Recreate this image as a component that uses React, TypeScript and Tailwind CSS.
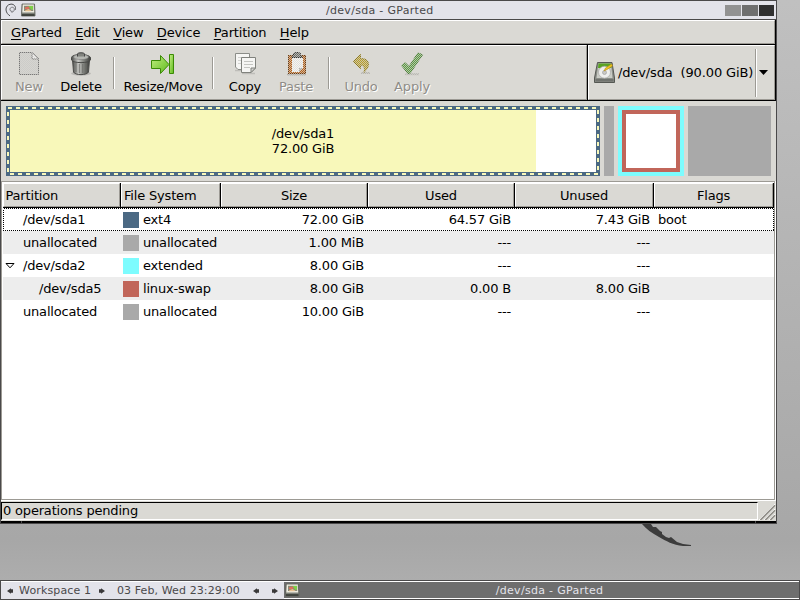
import type { ReactNode } from 'react';

type Row = {
  name: string;
  indent: string;
  expander?: boolean;
  swatch: string;
  fs: string;
  size: string;
  used: string;
  unused: string;
  flags?: string;
};

const ROWS: Row[] = [
  { name: '/dev/sda1', indent: 'pl-[20px]', swatch: 'bg-[#4b6983]', fs: 'ext4', size: '72.00 GiB', used: '64.57 GiB', unused: '7.43 GiB', flags: 'boot' },
  { name: 'unallocated', indent: 'pl-[20px]', swatch: 'bg-[#a9a9a9]', fs: 'unallocated', size: '1.00 MiB', used: '---', unused: '---' },
  { name: '/dev/sda2', indent: 'pl-[2px]', expander: true, swatch: 'bg-[#7dfcfe]', fs: 'extended', size: '8.00 GiB', used: '---', unused: '---' },
  { name: '/dev/sda5', indent: 'pl-[36px]', swatch: 'bg-[#c1665a]', fs: 'linux-swap', size: '8.00 GiB', used: '0.00 B', unused: '8.00 GiB' },
  { name: 'unallocated', indent: 'pl-[20px]', swatch: 'bg-[#a9a9a9]', fs: 'unallocated', size: '10.00 GiB', used: '---', unused: '---' },
];

const COLUMNS = [
  { label: 'Partition', className: 'justify-start pl-[1.5px]' },
  { label: 'File System', className: 'justify-start pl-[2px]' },
  { label: 'Size', className: 'justify-center' },
  { label: 'Used', className: 'justify-center' },
  { label: 'Unused', className: 'justify-center' },
  { label: 'Flags', className: 'justify-center' },
];

const GRID = 'grid grid-cols-[118px_100px_147px_147px_139px_120px]';

const MENUS = ['GParted', 'Edit', 'View', 'Device', 'Partition', 'Help'];

export default function App() {
  return (
    <div className="flex h-[600px] w-[800px] flex-col overflow-hidden bg-linear-to-b from-[#c0c0c0] via-[#a7a7a7] via-90% to-[#b0b0b0] font-['DejaVu_Sans',sans-serif] text-[13px] leading-[15px] tracking-[-0.18px] text-black">
      <div className="flex h-[524px] w-[777px] flex-col border border-[#4a494a] bg-[#dad9d4]">
        <TitleBar />
        <MenuBar />
        <div className="flex h-[56px] shrink-0">
          <Toolbar />
          <DevicePicker />
        </div>
        <DiskMap />
        <PartitionList />
        <StatusBar />
        {/* resize handle with its two corner grips */}
        <div className="flex h-[2px] shrink-0 gap-px bg-[#4a494a]">
          <div className="w-[20px] bg-black" />
          <div className="flex-1 bg-black" />
          <div className="w-[20px] bg-black" />
        </div>
      </div>
      <div className="h-[56px] shrink-0">
        {/* tail of the wallpaper swirl */}
        <svg className="ml-[641px]" width="52" height="24" viewBox="0 0 52 24">
          <path d="M1 0H10L12 3L15 3L19 7L21 8V10L25 13L28 14L30 13L36 18L42 20L50 21V22H42C32 21 25 17 18 13C11 9 5 5 1 0Z" fill="#3c3c3c" />
        </svg>
      </div>
      <Taskbar />
    </div>
  );
}

function TitleBar() {
  return (
    <div className="flex h-[19px] shrink-0 items-center border-b border-[#4a494a] bg-[#e3e3ea] pl-[4px]">
      <Swirl />
      <div className="ml-[4px]">
        <DiskIcon />
      </div>
      <div className="flex-1 pl-[290px] text-[11px] tracking-[0.3px] text-[#4a494a]">/dev/sda - GParted</div>
      <div className="mr-[2px] flex gap-px">
        <div className="h-[11px] w-[16px] bg-[#929292]" />
        <div className="h-[11px] w-[16px] bg-[#6e6e6e]" />
        <div className="h-[11px] w-[15px] bg-[#303030]" />
      </div>
    </div>
  );
}

function MenuBar() {
  return (
    <div className="h-[25px] shrink-0 border-r border-b border-black">
      <div className="flex h-full items-center gap-[13.5px] border border-t-white border-r-[#9c9a94] border-b-[#9c9a94] border-l-white pl-[9px]">
        {MENUS.map((m) => (
          <span key={m}>
            <span className="underline underline-offset-2">{m[0]}</span>
            {m.slice(1)}
          </span>
        ))}
      </div>
    </div>
  );
}

function Toolbar() {
  return (
    <div className="w-[587px] shrink-0 border-r border-b border-black">
      <div className="flex h-full border border-t-white border-r-[#9c9a94] border-b-[#9c9a94] border-l-white">
        <Tool label="New" width="w-[54px]" disabled>
          <NewIcon />
        </Tool>
        <Tool label="Delete" width="w-[50px]">
          <TrashIcon />
        </Tool>
        <Separator className="pl-[2px]" />
        <Tool label="Resize/Move" width="w-[86px]">
          <ResizeIcon />
        </Tool>
        <Separator />
        <Tool label="Copy" width="w-[50px]">
          <CopyIcon />
        </Tool>
        <Tool label="Paste" width="w-[52px]" disabled>
          <PasteIcon />
        </Tool>
        <Separator />
        <Tool label="Undo" width="w-[50px]" disabled>
          <UndoIcon />
        </Tool>
        <Tool label="Apply" width="w-[52px]" disabled>
          <ApplyIcon />
        </Tool>
      </div>
    </div>
  );
}

function Tool({ label, width, disabled, children }: { label: string; width: string; disabled?: boolean; children: ReactNode }) {
  return (
    <div className={`${width} flex shrink-0 flex-col items-center pt-[6px]`}>
      <svg width="24" height="24" viewBox="0 0 24 24">
        <defs>
          <pattern id="stipple" width="2" height="2" patternUnits="userSpaceOnUse">
            <path d="M0 0h1v1H0zM1 1h1v1H1z" fill="#dad9d4" fillOpacity="0.7" shapeRendering="crispEdges" />
          </pattern>
        </defs>
        {children}
        {disabled && <rect width="24" height="24" fill="url(#stipple)" />}
      </svg>
      <span
        className={
          disabled
            ? 'mt-[3px] whitespace-nowrap text-[#8f8d88] [text-shadow:1px_1px_0_#fff]'
            : 'mt-[3px] whitespace-nowrap'
        }
      >
        {label}
      </span>
    </div>
  );
}

function Separator({ className = '' }: { className?: string }) {
  return (
    <div className={`${className} flex w-[14px] shrink-0 justify-center pt-[11px]`}>
      <div className="h-[32px] w-[2px] border-r border-l border-r-white border-l-[#9c9a94]" />
    </div>
  );
}

function DevicePicker() {
  return (
    <div className="flex-1 border-r border-b border-black">
      <div className="flex h-full items-center border border-t-white border-r-[#9c9a94] border-b-[#9c9a94] border-l-white pl-[5px]">
        <svg className="shrink-0" width="22" height="22" viewBox="0 0 22 22">
          <path d="M3.5 0.5H18L20.5 16V20.5H0.5V16Z" fill="#8b8e88" stroke="#555853" />
          <path d="M4.5 1.5H17L18.5 16H2.5Z" fill="#c9ccc5" />
          <path d="M4.5 1.5H17L17.5 6H4Z" fill="#58a321" />
          <circle cx="10.5" cy="10.2" r="6" fill="#efefed" stroke="#a5a5a3" strokeWidth="0.7" />
          <circle cx="10.5" cy="10.5" r="2" fill="#c9c9c7" stroke="#999" strokeWidth="0.6" />
          <path d="M17.5 2L18.5 4L13 7.5L10 9L11.5 6Z" fill="#edc522" stroke="#b38a10" strokeWidth="0.6" />
          <path d="M1.5 17H19.5V19.5H1.5Z" fill="#70736e" />
        </svg>
        <span className="ml-[2px] tracking-[-0.14px] whitespace-pre">/dev/sda  (90.00 GiB)</span>
        <div className="ml-auto flex items-center">
          <div className="h-[48px] w-[2px] border-r border-l border-r-white border-l-[#9c9a94]" />
          <svg className="mr-[6px] ml-[2px]" width="9" height="5" viewBox="0 0 9 5">
            <path d="M0 0H9L4.5 5Z" fill="#000" />
          </svg>
        </div>
      </div>
    </div>
  );
}

function DiskMap() {
  return (
    <div className="flex h-[80px] shrink-0 gap-[4px] pt-[5px] pl-[5px]">
      <div className="grid h-[70px] w-[594px]">
        <div className="col-start-1 row-start-1 flex border-4 border-[#4b6983]">
          <div className="w-[526px] bg-[#f8f8ba]" />
          <div className="flex-1 bg-white" />
        </div>
        <svg className="col-start-1 row-start-1" width="594" height="70" viewBox="0 0 594 70">
          <rect x="2" y="2" width="590" height="66" fill="none" stroke="#f8f8ba" strokeWidth="2" strokeDasharray="4 4" shapeRendering="crispEdges" />
        </svg>
        <div className="col-start-1 row-start-1 self-center text-center">
          /dev/sda1
          <br />
          72.00 GiB
        </div>
      </div>
      <div className="h-[70px] w-[10px] bg-[#a9a9a9]" />
      <div className="h-[70px] w-[66px] border-4 border-[#7dfcfe]">
        <div className="h-full border-4 border-[#c1665a] bg-white" />
      </div>
      <div className="h-[70px] w-[83px] bg-[#a9a9a9]" />
    </div>
  );
}

function PartitionList() {
  return (
    <div className="h-[319px] shrink-0 bg-white pr-px">
      <div className="h-full border border-[#9c9a94] bg-white pt-px">
        <div className={`${GRID} ml-px h-[25px]`}>
          {COLUMNS.map((c) => (
            <div key={c.label} className="border-r border-b border-black bg-[#dad9d4]">
              <div className={`${c.className} flex h-full items-center border border-t-white border-r-[#9c9a94] border-b-[#9c9a94] border-l-white`}>
                {c.label}
              </div>
            </div>
          ))}
        </div>
        {ROWS.map((r, i) => (
          <PartitionRow key={i} row={r} striped={i % 2 === 1} focused={i === 0} />
        ))}
      </div>
    </div>
  );
}

function PartitionRow({ row, striped, focused }: { row: Row; striped: boolean; focused: boolean }) {
  return (
    <div className={`relative ml-px h-[23px] ${striped ? 'bg-[#ededed]' : 'bg-white'}`}>
      <div className={`${GRID} h-full items-center`}>
        <div className={`${row.indent} flex items-center`}>
          {row.expander && (
            <svg className="mr-[8px]" width="10" height="6" viewBox="0 0 10 6">
              <path d="M1 0.5H9L5 4.8Z" fill="#fff" stroke="#000" />
            </svg>
          )}
          {row.name}
        </div>
        <div className="flex items-center gap-[4px] pl-[2px]">
          <div className={`${row.swatch} size-4`} />
          {row.fs}
        </div>
        <div className="pr-[4px] text-right">{row.size}</div>
        <div className="pr-[4px] text-right">{row.used}</div>
        <div className="pr-[4px] text-right">{row.unused}</div>
        <div className="pl-[4px]">{row.flags}</div>
      </div>
      {focused && (
        <svg className="absolute top-0 left-0" width="771" height="23">
          <rect x="0.5" y="0.5" width="770" height="22" fill="none" stroke="#000" strokeDasharray="1 1" shapeRendering="crispEdges" />
        </svg>
      )}
    </div>
  );
}

function StatusBar() {
  return (
    <div className="flex h-[21px] shrink-0 border-t border-white pt-px pb-px">
      <div className="h-[18px] w-[757px] border border-t-black border-r-white border-b-white border-l-black pl-px">
        0 operations pending
      </div>
      <svg width="18" height="18" viewBox="0 0 18 18">
        {[0, 5, 10].map((o) => (
          <g key={o} fill="none">
            <path d={`M${1 + o} 18L17 ${2 + o}`} stroke="#fff" />
            <path d={`M${2.3 + o} 18L17 ${3.3 + o}`} stroke="#8e8c86" strokeWidth="1.6" />
          </g>
        ))}
      </svg>
    </div>
  );
}

function Taskbar() {
  return (
    <div className="flex h-[20px] shrink-0 border border-[#4a494a] bg-[#e3e3ea] text-[11px] text-[#4a494a]">
      <div className="flex w-[283px] shrink-0 items-center border-t border-white pl-[6px]">
        <Arrow dir="left" />
        <span className="ml-[5px] w-[79px] tracking-[0.15px] whitespace-nowrap">Workspace 1</span>
        <Arrow dir="right" />
        <span className="ml-[12px] w-[136px] tracking-[0.1px] whitespace-nowrap">03 Feb, Wed 23:29:00</span>
        <Arrow dir="left" />
        <div className="w-[11px]" />
        <Arrow dir="right" />
      </div>
      <div className="flex flex-1 items-center border-t border-b border-white bg-[#6e6e6e] pl-px">
        <DiskIcon />
        <span className="flex-1 text-center tracking-[0.3px] text-[#e3e3ea]">/dev/sda - GParted</span>
      </div>
    </div>
  );
}

function Arrow({ dir }: { dir: 'left' | 'right' }) {
  return (
    <svg width="7" height="6" viewBox="0 0 7 6" className="shrink-0">
      <path d={dir === 'left' ? 'M0 3L4 0.2V1.3H6V4.7H4V5.8Z' : 'M7 3L3 0.2V1.3H1V4.7H3V5.8Z'} fill="#3a393a" />
    </svg>
  );
}

function Swirl() {
  return (
    <svg width="12" height="14" viewBox="0 0 12 14" fill="none" stroke="#4f4f52">
      <path d="M7.5 8.2C5.5 8.8 4.6 7.2 5 5.8C5.6 3.8 8.8 3.6 9.3 5.9C9.6 8 7.8 9.3 6.4 9.2" strokeWidth="0.7" />
      <path d="M10.3 6.8C11.3 3.3 8.8 1 6 1.1C2.6 1.3 0.7 4.2 1 7C1.4 9.8 3 11.7 5 12.8" strokeWidth="1" />
    </svg>
  );
}

function DiskIcon() {
  return (
    <svg width="15" height="14" viewBox="0 0 15 14" className="shrink-0">
      <path d="M1 1H13.5L14 10V13H0.5V10Z" fill="#7d8078" stroke="#60625c" strokeWidth="0.8" />
      <path d="M1.8 1.5H12.8L13.2 9.5H1.3Z" fill="#eeece0" />
      <path d="M3 2.8H12.2V8H3Z" fill="#8a8a76" />
      <path d="M7.5 3H12V7L10 6.5Z" fill="#7ed048" />
      <path d="M4 4.5L7 3.5L9 5L6 6.5L4 6Z" fill="#e0705a" />
      <path d="M4 7.5L7.5 6L10.5 7.8L9 8.3H4Z" fill="#e9c28f" />
      <path d="M1 12H13.5" stroke="#2c2e2a" strokeWidth="1.4" />
    </svg>
  );
}

function NewIcon() {
  return (
    <g>
      <path d="M2.5 0.5H15L21.5 7V22.5H2.5Z" fill="#dededc" stroke="#777" />
      <path d="M3 1H15V7H21V22H3Z" fill="#b9b9b6" fillOpacity="0.5" />
      <path d="M15 0.5V7H21.5Z" fill="#eee" stroke="#777" />
    </g>
  );
}

function TrashIcon() {
  return (
    <g>
      <defs>
        <linearGradient id="can">
          <stop offset="0" stopColor="#4a4b48" />
          <stop offset="0.35" stopColor="#c9cac6" />
          <stop offset="0.6" stopColor="#8a8c87" />
          <stop offset="1" stopColor="#3d3e3b" />
        </linearGradient>
      </defs>
      <ellipse cx="12" cy="21.5" rx="10" ry="2" fill="#000" opacity="0.15" />
      <path d="M3.5 7.5L4.5 20C6 23.5 18 23.5 19.5 20L20.5 7.5Z" fill="url(#can)" stroke="#4c4d4a" />
      <path d="M7 11V20M10.3 12V21M13.7 12V21M17 11V20" stroke="#6b6c68" strokeWidth="0.8" />
      <path d="M2.5 5.5C3 1.5 20 1.5 21.5 5.5V8C20 11.5 4 11.5 2.5 8Z" fill="url(#can)" stroke="#494a47" />
      <ellipse cx="12" cy="5" rx="7.5" ry="2.6" fill="#b5b7b2" stroke="#777" strokeWidth="0.5" />
      <path d="M8.5 4.5V1.8C9 0.4 15 0.4 15.5 1.8V4.5" fill="#81837e" stroke="#444" />
    </g>
  );
}

function ResizeIcon() {
  return (
    <g stroke="#3b8a06" strokeWidth="1">
      <defs>
        <linearGradient id="leaf" x2="1" y2="1">
          <stop offset="0" stopColor="#c4ee84" />
          <stop offset="1" stopColor="#5dbb1b" />
        </linearGradient>
      </defs>
      <path d="M0.5 8.5H9.5V3.5L18 12.5L9.5 21.5V16.5H0.5Z" fill="url(#leaf)" />
      <path d="M18.5 2.5H22.5V21.5H18.5Z" fill="url(#leaf)" />
    </g>
  );
}

function CopyIcon() {
  return (
    <g>
      <path d="M2 18.5H9M9 21.5H22" stroke="#000" strokeWidth="1.5" opacity="0.12" />
      <path d="M2.5 1.5H16.5V17.5H5L2.5 15Z" fill="#f6f6f4" stroke="#8b8d88" />
      <path d="M5 5.5H14M5 8.5H14M5 11.5H9" stroke="#d2d3d0" />
      <path d="M8.5 5.5H22.5V16L18 20.5H8.5Z" fill="#f6f6f4" stroke="#80827d" />
      <path d="M11 9.5H20M11 12.5H20M11 15.5H17" stroke="#c4c5c1" />
      <path d="M22.5 16H18V20.5Z" fill="#d5d5d2" stroke="#80827d" />
    </g>
  );
}

function PasteIcon() {
  return (
    <g>
      <path d="M3 22.5H22" stroke="#000" strokeWidth="2" opacity="0.2" />
      <path d="M4 3H22V22H4Z" fill="#6e3a0c" />
      <path d="M5 4H21V21H5Z" fill="#b4621c" />
      <path d="M8 6H19V16L15 20H8Z" fill="#f4f4f2" />
      <path d="M19 16H15V20Z" fill="#adadab" />
      <path d="M7.5 5.5L9.5 3V1.5L11.5 0.5H14.5L16.5 1.5V3L18.5 5.5Z" fill="#686a66" stroke="#2f302e" />
    </g>
  );
}

function UndoIcon() {
  return (
    <g>
      <path d="M12 21H21" stroke="#000" strokeWidth="2" opacity="0.15" />
      <path d="M4.5 9.5L11.5 2.5V6.5C18 6.5 21 10 18.5 16L15 20.5C16 16 15.5 13.5 11.5 13V16.5Z" fill="#b59c2c" stroke="#8d7a20" />
    </g>
  );
}

function ApplyIcon() {
  return (
    <g>
      <path d="M5 22.2H19" stroke="#000" strokeWidth="2" opacity="0.15" />
      <path d="M1.5 13.5L5 10.5L9 14.5L18 0.8L22.5 2.8L10 21.5H8Z" fill="#5c9a44" stroke="#4b7d38" />
    </g>
  );
}
